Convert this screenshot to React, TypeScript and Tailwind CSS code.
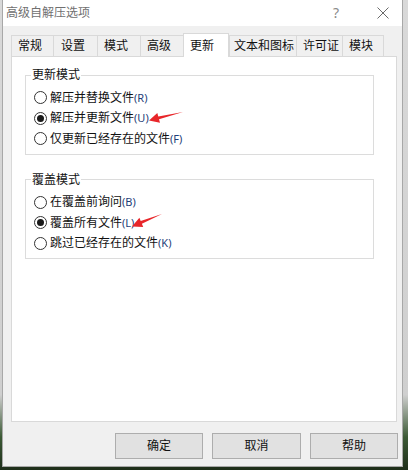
import React from "react";

const tabs = [
  { label: "常规", w: "w-[42px]", pl: "pl-[6px]" },
  { label: "设置", w: "w-[44px]", pl: "pl-[7px]" },
  { label: "模式", w: "w-[43px]", pl: "pl-[6px]" },
  { label: "高级", w: "w-[43px]", pl: "pl-[6px]" },
  { label: "更新", w: "w-[46px]", pl: "pl-[6px]", active: true },
  { label: "文本和图标", w: "w-[67px]", pl: "pl-[4px]" },
  { label: "许可证", w: "w-[46px]", pl: "pl-[6px]" },
  { label: "模块", w: "w-[42px]", pl: "pl-[6px]", last: true },
];

function Radio({ checked, text, key2 }: { checked?: boolean; text: string; key2: string }) {
  return (
    <div className="flex h-[20.5px] items-center pl-[3px]">
      <span className="flex h-[13px] w-[13px] items-center justify-center rounded-full border border-[#333333] bg-white">
        {checked && <span className="h-[7px] w-[7px] rounded-full bg-[#1a1a1a]" />}
      </span>
      <span className="ml-[3px] text-[12px] leading-[16px] text-[#111]">
        {text}
        <span className="text-[11px] text-[#1f3f7a]">({key2})</span>
      </span>
    </div>
  );
}

function Group({ title, items, className }: { title: string; items: { t: string; k: string; c?: boolean }[]; className: string }) {
  return (
    <fieldset className={`ml-[13px] w-[349px] border border-[#dcdcdc] pb-[4.5px] pl-[5px] pt-[4.5px] ${className}`}>
      <legend className="px-[1px] text-[12px] leading-[16px] text-[#111]">{title}</legend>
      {items.map((it) => (
        <Radio key={it.t} checked={it.c} text={it.t} key2={it.k} />
      ))}
    </fieldset>
  );
}

export default function App() {
  return (
    <div className="relative h-[470px] w-[408px] overflow-hidden bg-[linear-gradient(180deg,#d9d9d9_0%,#cfcfcf_84%,#3c5a35_93%,#1e2e1a_100%)] pl-[2px] font-['Noto_Sans','Noto_Sans_CJK_SC',sans-serif]">
      <div className="flex h-[467px] w-[401px] flex-col border-x border-b border-[#a8a8a8] bg-[#f0f0f0]">
        {/* title bar */}
        <div className="flex h-[26px] items-center bg-white">
          <span className="pl-[3px] text-[12px] leading-[16px] text-[#707070]">高级自解压选项</span>
          <span className="ml-auto mr-[38px] text-[14px] leading-[16px] text-[#8a8a8a]">?</span>
          <svg width="12" height="12" viewBox="0 0 12 12" className="mr-[13px]">
            <path d="M0.5 0.5 L11.5 11.5 M11.5 0.5 L0.5 11.5" stroke="#6a6a6a" strokeWidth="1" fill="none" />
          </svg>
        </div>
        {/* tabs */}
        <div className="mt-[7px] flex h-[23px] items-end pl-[8px]">
          {tabs.map((t) => (
            <div
              key={t.label}
              className={`flex items-center ${t.w} ${t.pl} text-[12px] leading-[16px] text-[#111] ${
                t.active
                  ? "relative z-10 -mb-px h-[24px] border-x border-t border-[#d9d9d9] bg-white"
                  : `h-[21px] border-l border-t border-[#d9d9d9] bg-[#f0f0f0] ${t.last ? "border-r" : ""}`
              }`}
            >
              {t.label}
            </div>
          ))}
        </div>
        {/* panel */}
        <div className="ml-[8px] h-[366px] w-[386px] border border-[#d9d9d9] bg-white">
          <Group
            title="更新模式"
            className="mt-[10px]"
            items={[
              { t: "解压并替换文件", k: "R" },
              { t: "解压并更新文件", k: "U", c: true },
              { t: "仅更新已经存在的文件", k: "F" },
            ]}
          />
          <Group
            title="覆盖模式"
            className="mt-[17px]"
            items={[
              { t: "在覆盖前询问", k: "B" },
              { t: "覆盖所有文件", k: "L", c: true },
              { t: "跳过已经存在的文件", k: "K" },
            ]}
          />
        </div>
        {/* buttons */}
        <div className="mt-[11px] flex gap-[9px] pl-[112px]">
          {[
            { l: "确定", w: "w-[88px]" },
            { l: "取消", w: "w-[89px]" },
            { l: "帮助", w: "w-[88px]" },
          ].map((b) => (
            <div
              key={b.l}
              className={`flex h-[26px] ${b.w} items-center justify-center border border-[#adadad] bg-[#e1e1e1] text-[12px] leading-[16px] text-[#111]`}
            >
              {b.l}
            </div>
          ))}
        </div>
      </div>
      {/* red arrows overlay */}
      <svg className="pointer-events-none absolute left-0 top-0" width="408" height="470" viewBox="0 0 408 470">
        <polygon
          points="149,120.5 160,122.7 159,119.3 183,112 158.3,116.4 157.3,113 "
          fill="#e8262a"
        />
        <polygon
          points="132,226.5 143.2,227 141.9,223.7 162,214 140.7,220.9 139.4,217.7"
          fill="#e8262a"
        />
      </svg>
    </div>
  );
}
